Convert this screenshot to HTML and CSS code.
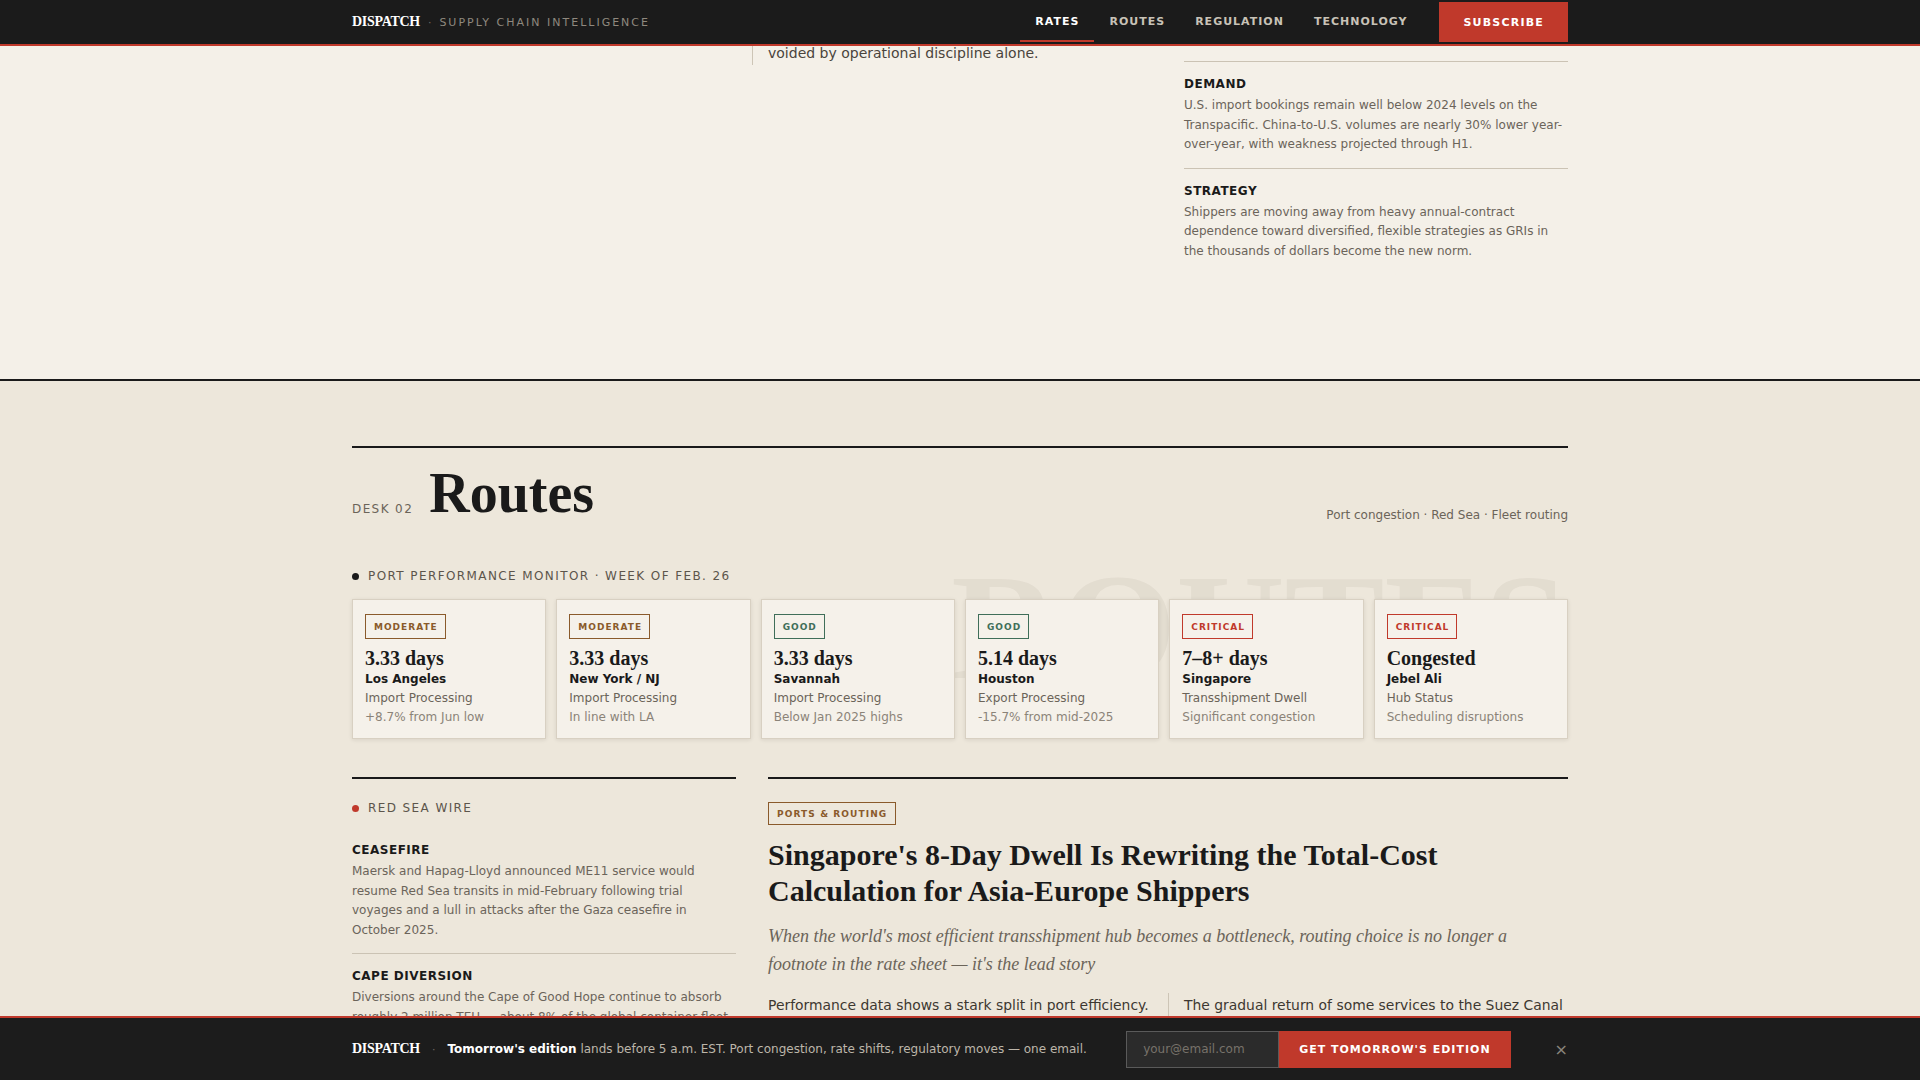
FILE: index.html
```html
<!DOCTYPE html>
<html lang="en">
<head>
<meta charset="utf-8">
<title>Dispatch — Supply Chain Intelligence</title>
<link rel="stylesheet" href="styles.css">
</head>
<body>
<header class="masthead">
  <div class="wrap masthead-inner">
    <div class="brand">
      <span class="logo">DISPATCH</span>
      <span class="brand-sep">·</span>
      <span class="tagline">SUPPLY CHAIN INTELLIGENCE</span>
    </div>
    <nav class="nav">
      <a class="nav-link active" href="#">RATES</a>
      <a class="nav-link" href="#">ROUTES</a>
      <a class="nav-link" href="#">REGULATION</a>
      <a class="nav-link" href="#">TECHNOLOGY</a>
      <a class="subscribe" href="#">SUBSCRIBE</a>
    </nav>
  </div>
</header>

<main>
  <section class="brief">
    <div class="wrap brief-grid">
      <div class="article-tail">
        <div class="col"></div>
        <div class="col col-ruled">
          <p class="col-text">voided by operational discipline alone.</p>
        </div>
      </div>
      <aside class="sidebar">
        <div class="note">
          <h4 class="note-label">DEMAND</h4>
          <p class="note-text">U.S. import bookings remain well below 2024 levels on the Transpacific. China-to-U.S. volumes are nearly 30% lower year-over-year, with weakness projected through H1.</p>
        </div>
        <div class="note">
          <h4 class="note-label">STRATEGY</h4>
          <p class="note-text">Shippers are moving away from heavy annual-contract dependence toward diversified, flexible strategies as GRIs in the thousands of dollars become the new norm.</p>
        </div>
      </aside>
    </div>
  </section>

  <section class="desk">
    <div class="wrap desk-inner">
      <div class="watermark" aria-hidden="true">ROUTES</div>
      <div class="desk-head">
        <div class="desk-title">
          <span class="desk-num">DESK 02</span>
          <h2 class="desk-name">Routes</h2>
        </div>
        <div class="desk-meta">Port congestion · Red Sea · Fleet routing</div>
      </div>

      <p class="kicker monitor"><span class="kicker-dot"></span>PORT PERFORMANCE MONITOR · WEEK OF FEB. 26</p>

      <div class="ports">
        <div class="port">
          <span class="badge moderate">MODERATE</span>
          <div class="port-value">3.33 days</div>
          <div class="port-name">Los Angeles</div>
          <div class="port-type">Import Processing</div>
          <div class="port-note">+8.7% from Jun low</div>
        </div>
        <div class="port">
          <span class="badge moderate">MODERATE</span>
          <div class="port-value">3.33 days</div>
          <div class="port-name">New York / NJ</div>
          <div class="port-type">Import Processing</div>
          <div class="port-note">In line with LA</div>
        </div>
        <div class="port">
          <span class="badge good">GOOD</span>
          <div class="port-value">3.33 days</div>
          <div class="port-name">Savannah</div>
          <div class="port-type">Import Processing</div>
          <div class="port-note">Below Jan 2025 highs</div>
        </div>
        <div class="port">
          <span class="badge good">GOOD</span>
          <div class="port-value">5.14 days</div>
          <div class="port-name">Houston</div>
          <div class="port-type">Export Processing</div>
          <div class="port-note">-15.7% from mid-2025</div>
        </div>
        <div class="port">
          <span class="badge critical">CRITICAL</span>
          <div class="port-value">7–8+ days</div>
          <div class="port-name">Singapore</div>
          <div class="port-type">Transshipment Dwell</div>
          <div class="port-note">Significant congestion</div>
        </div>
        <div class="port">
          <span class="badge critical">CRITICAL</span>
          <div class="port-value">Congested</div>
          <div class="port-name">Jebel Ali</div>
          <div class="port-type">Hub Status</div>
          <div class="port-note">Scheduling disruptions</div>
        </div>
      </div>

      <div class="desk-lower">
        <aside class="wire">
          <p class="kicker wire-head"><span class="kicker-dot red"></span>RED SEA WIRE</p>
          <div class="note first">
            <h4 class="note-label">CEASEFIRE</h4>
            <p class="note-text">Maersk and Hapag-Lloyd announced ME11 service would resume Red Sea transits in mid-February following trial voyages and a lull in attacks after the Gaza ceasefire in October 2025.</p>
          </div>
          <div class="note">
            <h4 class="note-label">CAPE DIVERSION</h4>
            <p class="note-text">Diversions around the Cape of Good Hope continue to absorb roughly 2 million TEU — about 8% of the global container fleet — keeping effective capacity on Asia-Europe lanes tight.</p>
          </div>
        </aside>

        <article class="story">
          <span class="story-tag">PORTS &amp; ROUTING</span>
          <h3 class="story-head">Singapore's 8-Day Dwell Is Rewriting the Total-Cost Calculation for Asia-Europe Shippers</h3>
          <p class="story-dek">When the world's most efficient transshipment hub becomes a bottleneck, routing choice is no longer a footnote in the rate sheet — it's the lead story</p>
          <div class="story-body">
            <p>Performance data shows a stark split in port efficiency. North American gateways have stabilized near three days, while the major Asian hubs absorb the knock-on effects of shifting rotations.</p>
            <p class="col-ruled">The gradual return of some services to the Suez Canal has done little to ease the pressure, as bunched arrivals compound yard density at the largest hubs.</p>
          </div>
        </article>
      </div>
    </div>
  </section>
</main>

<div class="signup">
  <div class="wrap signup-inner">
    <span class="logo">DISPATCH</span>
    <span class="signup-sep">·</span>
    <span class="signup-text"><strong>Tomorrow's edition</strong> lands before 5 a.m. EST. Port congestion, rate shifts, regulatory moves — one email.</span>
    <form class="signup-form">
      <input class="signup-input" type="email" placeholder="your@email.com">
      <button class="signup-btn" type="button">GET TOMORROW'S EDITION</button>
    </form>
    <button class="signup-close" type="button" aria-label="Close">×</button>
  </div>
</div>
</body>
</html>
```

FILE: styles.css
```css
* { box-sizing: border-box; }

body {
  margin: 0;
  background: #ede7db;
  font-family: "DejaVu Sans", sans-serif;
  color: #1a1a1a;
}

.wrap { width: 1216px; margin: 0 auto; }

/* ---------- masthead ---------- */
.masthead {
  position: fixed;
  top: 0; left: 0; right: 0;
  height: 46px;
  background: #1b1b1b;
  border-bottom: 2px solid #c0392b;
  z-index: 20;
}
.masthead-inner {
  display: flex;
  align-items: center;
  justify-content: space-between;
  height: 44px;
}
.brand { display: flex; align-items: center; }
.logo {
  font-family: "Liberation Serif", serif;
  font-weight: 700;
  font-size: 14px;
  letter-spacing: -0.3px;
  color: #ffffff;
}
.brand-sep { color: #6f6a62; font-size: 11px; margin: 0 8px; }
.tagline { color: #8f897f; font-size: 11px; letter-spacing: 2px; }

.nav { display: flex; align-items: flex-start; height: 44px; }
.nav-link {
  height: 42px;
  display: flex;
  align-items: center;
  padding: 3px 15px 0;
  font-size: 11px;
  font-weight: 700;
  letter-spacing: 1px;
  color: #c8c2b7;
  text-decoration: none;
  border-bottom: 2px solid transparent;
}
.nav-link.active { color: #ffffff; border-bottom-color: #c0392b; }
.subscribe {
  margin: 2px 0 0 16px;
  height: 40px;
  display: flex;
  align-items: center;
  padding: 1px 24px 0 25px;
  background: #c0392b;
  color: #ffffff;
  font-size: 11px;
  font-weight: 700;
  letter-spacing: 1.2px;
  text-decoration: none;
}

/* ---------- brief (top section) ---------- */
.brief {
  background: #f4f0e8;
  padding-top: 41px;
  min-height: 379px;
}
.brief-grid {
  display: grid;
  grid-template-columns: 800px 384px;
  column-gap: 32px;
  align-items: start;
}
.article-tail {
  display: grid;
  grid-template-columns: 1fr 1fr;
  column-gap: 32px;
}
.col-ruled { position: relative; }
.col-ruled::before {
  content: "";
  position: absolute;
  left: -16px; top: 0; bottom: 0;
  width: 1px;
  background: #cdc5b6;
}
.col-text {
  margin: 0;
  font-size: 14px;
  line-height: 24px;
  color: #4a443c;
}
.sidebar { margin-top: 20px; }

.note { border-top: 1px solid #cbc3b4; padding: 14px 0 13px; }
.note.first { border-top: none; }
.note-label {
  margin: 0 0 4px;
  font-size: 12px;
  line-height: 16px;
  font-weight: 700;
  letter-spacing: 0.5px;
  color: #1a1a1a;
}
.note-text {
  margin: 0;
  font-size: 12px;
  line-height: 19.6px;
  color: #6b645a;
}

/* ---------- routes desk ---------- */
.desk {
  border-top: 2px solid #1a1a1a;
  background: #ede7db;
  padding: 65px 0 120px;
  overflow: hidden;
}
.desk-inner { position: relative; }
.watermark {
  position: absolute;
  right: 0;
  top: 106px;
  font-family: "Liberation Serif", serif;
  font-weight: 700;
  font-size: 150px;
  line-height: 1;
  color: rgba(60, 45, 25, 0.05);
  pointer-events: none;
}
.desk-head {
  position: relative;
  border-top: 2px solid #1a1a1a;
  padding-top: 17px;
  display: flex;
  align-items: flex-end;
  justify-content: space-between;
}
.desk-title { display: flex; align-items: flex-end; }
.desk-num {
  font-size: 12px;
  line-height: 16px;
  letter-spacing: 1.4px;
  color: #6b6459;
  margin: 0 16px 4px 0;
}
.desk-name {
  margin: 0;
  font-family: "Liberation Serif", serif;
  font-weight: 700;
  font-size: 56px;
  line-height: 1;
  color: #1a1a1a;
}
.desk-meta { font-size: 12px; line-height: 12px; color: #6b6459; }

.kicker {
  position: relative;
  display: flex;
  align-items: center;
  margin: 0;
  font-size: 12px;
  line-height: 16px;
  letter-spacing: 1.4px;
  color: #5c554b;
}
.kicker-dot {
  width: 7px; height: 7px;
  border-radius: 50%;
  background: #1a1a1a;
  margin-right: 9px;
}
.kicker-dot.red { background: #c0392b; }
.monitor { margin-top: 47px; }

.ports {
  position: relative;
  display: grid;
  grid-template-columns: repeat(6, 1fr);
  gap: 10px;
  margin-top: 15px;
}
.port {
  background: #f5f1ea;
  border: 1px solid #d8d0c2;
  box-shadow: 0 1px 4px rgba(40, 30, 15, 0.10);
  padding: 14px 12px 12px;
}
.badge {
  display: block;
  width: fit-content;
  font-size: 9px;
  line-height: 12px;
  font-weight: 700;
  letter-spacing: 1px;
  padding: 6px 7px 5px 8px;
  border: 1px solid currentColor;
}
.badge.moderate { color: #8a5a2b; }
.badge.good { color: #3f6e59; }
.badge.critical { color: #c0392b; }
.port-value {
  margin-top: 8px;
  font-family: "Liberation Serif", serif;
  font-weight: 700;
  font-size: 20px;
  line-height: 22px;
  color: #1a1a1a;
}
.port-name { margin-top: 2px; font-size: 12px; line-height: 16px; font-weight: 700; color: #1a1a1a; }
.port-type { margin-top: 2px; font-size: 12px; line-height: 19px; color: #6b6459; }
.port-note { font-size: 12px; line-height: 18px; color: #8b8378; }

.desk-lower {
  display: grid;
  grid-template-columns: 384px 800px;
  column-gap: 32px;
  margin-top: 38px;
}
.wire { border-top: 2px solid #1a1a1a; padding-top: 21px; }
.wire-head { margin-bottom: 12px; }

.story { border-top: 2px solid #1a1a1a; padding-top: 23px; }
.story-tag {
  display: block;
  width: fit-content;
  font-size: 9px;
  line-height: 10px;
  font-weight: 700;
  letter-spacing: 1.1px;
  color: #8a5a2b;
  border: 1px solid #8a5a2b;
  padding: 6px 8px 5px;
}
.story-head {
  margin: 12px 0 0;
  font-family: "Liberation Serif", serif;
  font-weight: 700;
  font-size: 30px;
  line-height: 36px;
  color: #1a1a1a;
}
.story-dek {
  margin: 13px 0 0;
  font-family: "Liberation Serif", serif;
  font-style: italic;
  font-size: 18px;
  line-height: 28px;
  color: #6b6459;
}
.story-body {
  display: grid;
  grid-template-columns: 1fr 1fr;
  column-gap: 32px;
  margin-top: 15px;
}
.story-body p {
  margin: 0;
  font-size: 13.9px;
  line-height: 24px;
  color: #3d3831;
}

/* ---------- signup bar ---------- */
.signup {
  position: fixed;
  left: 0; right: 0; bottom: 0;
  height: 64px;
  background: #1c1c1c;
  border-top: 2px solid #c0392b;
  z-index: 20;
}
.signup-inner { display: flex; align-items: center; height: 62px; }
.signup-sep { color: #6f6a62; font-size: 11px; margin: 0 12px; }
.signup-text { font-size: 12px; color: #bdb6aa; }
.signup-text strong { color: #ffffff; }
.signup-form { display: flex; margin: 0 0 0 auto; }
.signup-input {
  width: 153px;
  height: 37px;
  background: #2b2b2b;
  border: 1px solid #5a5a5a;
  padding: 0 16px;
  font-family: "DejaVu Sans", sans-serif;
  font-size: 12px;
  color: #dddddd;
  outline: none;
}
.signup-input::placeholder { color: #77726a; }
.signup-btn {
  height: 37px;
  padding: 0 20px;
  background: #c0392b;
  border: 0;
  color: #ffffff;
  font-family: "DejaVu Sans", sans-serif;
  font-size: 11px;
  font-weight: 700;
  letter-spacing: 1px;
}
.signup-close {
  margin-left: 44px;
  padding: 0;
  background: none;
  border: 0;
  color: #8a857c;
  font-family: "DejaVu Sans", sans-serif;
  font-size: 16px;
}
```
